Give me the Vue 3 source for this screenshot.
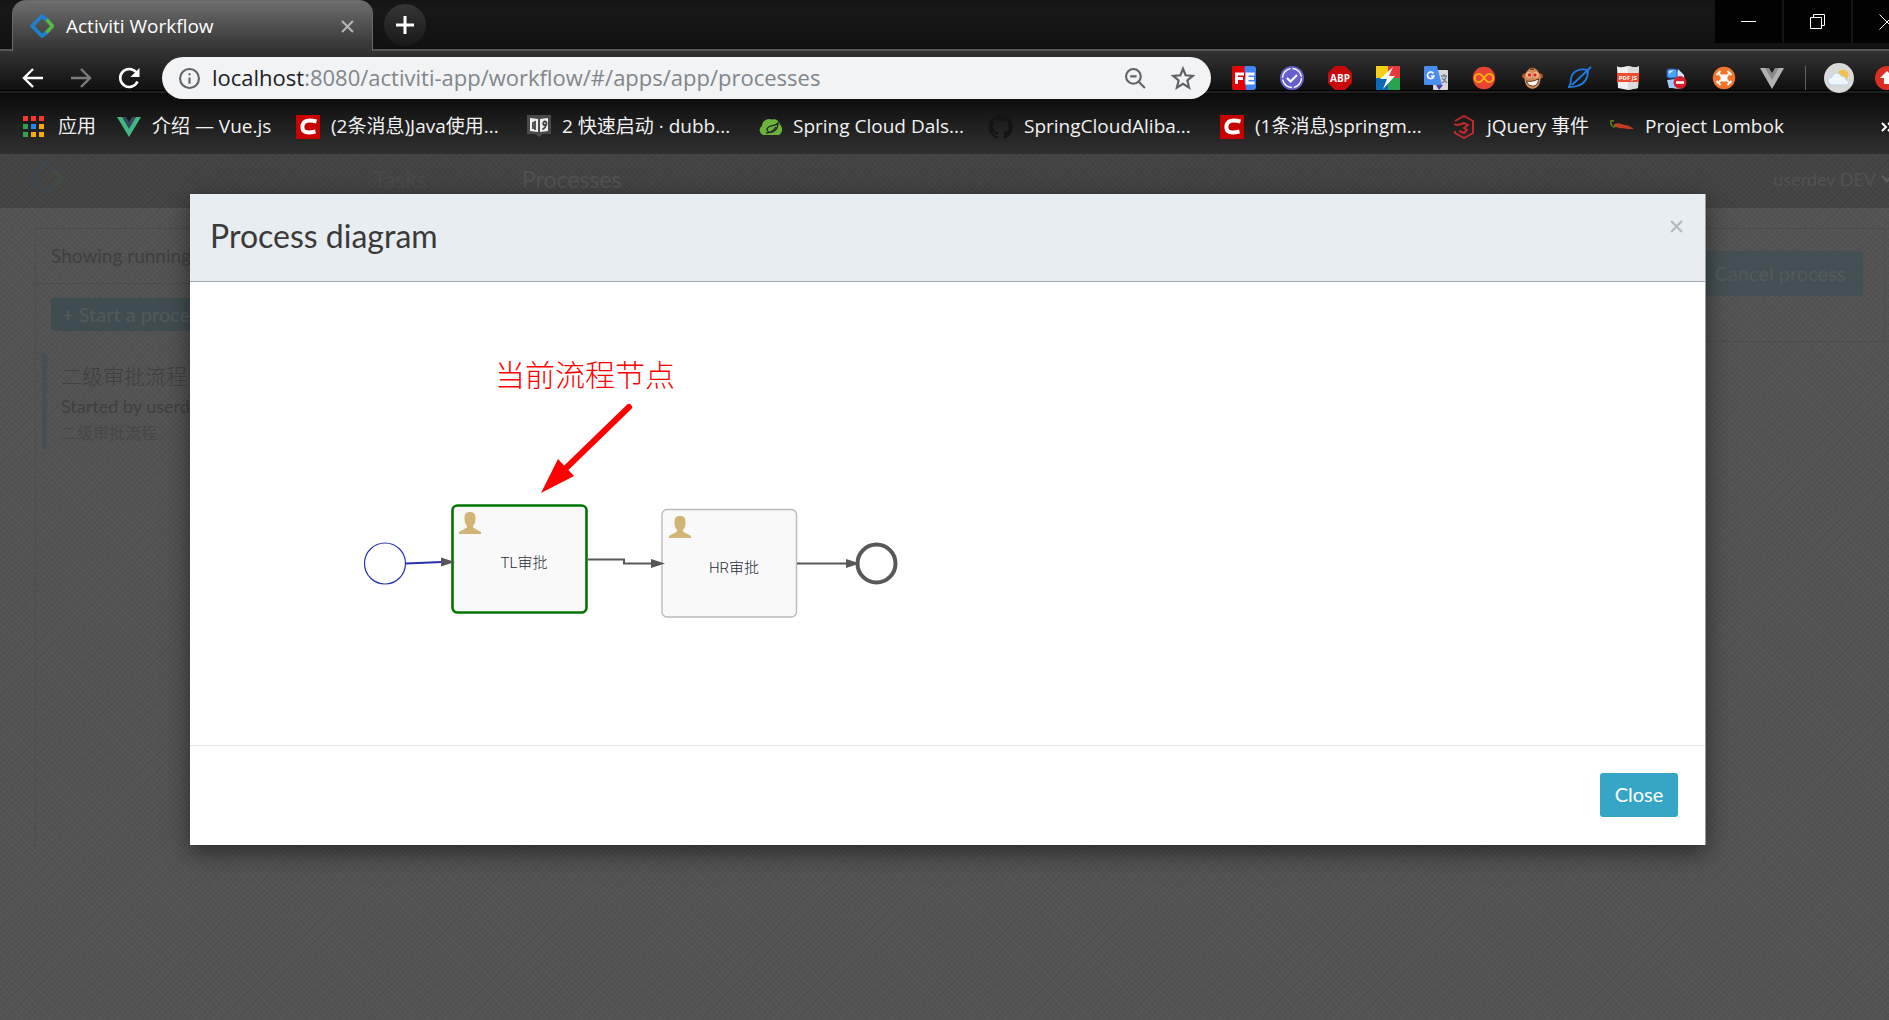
<script setup>
const bookmarks = [
  { icon: 'apps', label: '应用', width: 94 },
  { icon: 'vue', label: '介绍 — Vue.js', width: 179 },
  { icon: 'csdn', label: '(2条消息)Java使用...', width: 231 },
  { icon: 'dubbo', label: '2 快速启动 · dubb...', width: 231 },
  { icon: 'spring', label: 'Spring Cloud Dals...', width: 231 },
  { icon: 'github', label: 'SpringCloudAliba...', width: 231 },
  { icon: 'csdn', label: '(1条消息)springm...', width: 232 },
  { icon: 'jquery', label: 'jQuery 事件', width: 158 },
  { icon: 'lombok', label: 'Project Lombok', width: 180 },
]
const appColors = ['#f33a2f', '#f33a2f', '#f33a2f', '#2fa14f', '#2387f5', '#fba905', '#2fa14f', '#fba905', '#fba905']
const extensions = ['fe', 'check', 'abp', 'bolt', 'translate', 'infinity', 'monkey', 'feather', 'pdf', 'blocker', 'drone', 'vuegrey']
</script>

<template>
  <div class="window">
    <header class="browser">
      <div class="tabstrip">
        <div class="tab">
          <svg class="tab-logo" viewBox="0 0 24 24" aria-hidden="true">
            <path d="M17 6 12 2 2 12l10 10 5-4" fill="none" stroke="#1c82cf" stroke-width="3.6" stroke-linejoin="round" />
            <path d="m16.500 5.500 6 6.500-6 6.500" fill="none" stroke="#55b948" stroke-width="3.6" />
          </svg>
          <span class="tab-title">Activiti Workflow</span>
          <button class="tab-close" aria-label="Close tab">
            <svg viewBox="0 0 12 12"><path d="m1 1 10 10M11 1 1 11" stroke="#b4b4b4" stroke-width="2" /></svg>
          </button>
        </div>
        <button class="new-tab" aria-label="New tab">
          <svg viewBox="0 0 18 18"><path d="M9 0v18M0 9h18" stroke="#fff" stroke-width="3" /></svg>
        </button>
        <div class="win-buttons">
          <button aria-label="Minimize"><svg viewBox="0 0 16 16"><path d="M0 7.500h15" stroke="#fff" /></svg></button>
          <button aria-label="Restore"><svg viewBox="0 0 16 16"><path d="M.5 3.500h11v11H.5zM3.500 3V.5h11v11H12" fill="none" stroke="#fff" /></svg></button>
          <button aria-label="Close window"><svg viewBox="0 0 16 16"><path d="m.5.5 15 15m0-15-15 15" stroke="#fff" /></svg></button>
        </div>
      </div>

      <div class="bars">
        <div class="toolbar">
          <nav class="nav">
            <button aria-label="Back"><svg viewBox="0 0 24 24"><path d="M22 12H3m9-9-9 9 9 9" fill="none" stroke="#fff" stroke-width="2.400" /></svg></button>
            <button aria-label="Forward"><svg viewBox="0 0 24 24"><path d="M2 12h19m-9-9 9 9-9 9" fill="none" stroke="#7c7c7c" stroke-width="2.400" /></svg></button>
            <button aria-label="Reload"><svg viewBox="0 0 24 24"><path d="M20.500 15.500A9 9 0 1 1 19 6" fill="none" stroke="#fff" stroke-width="2.600" /><path d="M22.500 2v9h-9z" fill="#fff" /></svg></button>
          </nav>
          <div class="address">
            <svg class="addr-icon" viewBox="0 0 20 20" aria-hidden="true">
              <circle cx="10" cy="10" r="9" fill="none" stroke="#5f6368" stroke-width="2" />
              <path d="M10 9v6M10 5v2" stroke="#5f6368" stroke-width="2" />
            </svg>
            <a class="url" href="#/apps/app/processes"><b>localhost</b>:8080/activiti-app/workflow/#/apps/app/processes</a>
            <svg class="addr-icon" viewBox="0 0 20 20" aria-hidden="true">
              <circle cx="8" cy="8" r="7" fill="none" stroke="#5f6368" stroke-width="2" />
              <path d="M5 8h6M13 13l6 6" stroke="#5f6368" stroke-width="2" />
            </svg>
            <svg class="addr-star" viewBox="0 0 22 22" aria-hidden="true">
              <path d="m11 2.500 2.400 6 6.600.5-5 4.300 1.600 6.500-5.600-3.500-5.600 3.500L7 13.300 2 9l6.600-.5z" fill="none" stroke="#5f6368" stroke-width="2" />
            </svg>
          </div>
          <div class="extensions">
            <svg v-for="e in extensions" :key="e" viewBox="0 0 24 24" aria-hidden="true">
              <template v-if="e === 'fe'">
                <rect width="24" height="24" rx="3" fill="#4285f4" /><path d="M3 0h10c-2 5 2 8 0 12s1 7 1 12H3a3 3 0 0 1-3-3V3a3 3 0 0 1 3-3z" fill="#e60000" />
                <path d="M4.500 18V8H12M4.500 12.500H11M22.500 8H15v9h7.500M15 12.500h7" fill="none" stroke="#fff" stroke-width="3" />
              </template>
              <template v-else-if="e === 'check'">
                <circle cx="12" cy="12" r="12" fill="#6660cf" /><circle cx="12" cy="12" r="9.500" fill="none" stroke="#fff" stroke-width="1.400" stroke-dasharray="13 2" /><path d="m7 12 3.500 3.500L17 9" fill="none" stroke="#fff" stroke-width="2.200" />
              </template>
              <template v-else-if="e === 'abp'">
                <path d="M7 0h10l7 7v10l-7 7H7l-7-7V7z" fill="#c90a0a" /><text x="12" y="16" text-anchor="middle" class="abp">ABP</text>
              </template>
              <template v-else-if="e === 'bolt'">
                <rect width="12" height="12" fill="#f5d017" /><rect x="12" width="12" height="12" fill="#e5393a" /><rect y="12" width="12" height="12" fill="#0d6ab5" /><rect x="12" y="12" width="12" height="12" fill="#28a352" /><path d="M17 1 4 13h7L7 23l12-13h-6z" fill="#fff" />
              </template>
              <template v-else-if="e === 'translate'">
                <rect x="9" y="4" width="15" height="20" rx="1" fill="#d8d8d8" /><path d="M12 19h7l-4 5z" fill="#4a3fa8" /><path d="M1 0h12l5 19H1a1 1 0 0 1-1-1V1a1 1 0 0 1 1-1z" fill="#4a8df0" />
                <path d="M9.500 7.500A3.300 3.300 0 1 0 10 10H7" fill="none" stroke="#fff" stroke-width="1.600" /><path d="M17 10h6m-3-2v2m2 1c-1 3-2 5-4 6m0-5 5 5" fill="none" stroke="#71808f" stroke-width="1.300" />
              </template>
              <template v-else-if="e === 'infinity'">
                <circle cx="12" cy="12" r="11.200" fill="#ea4335" /><path d="M12 12c-3-4-4-4.200-5-4.200a4.200 4.200 0 0 0 0 8.400c1 0 2-.2 5-4.200s4-4.200 5-4.200a4.200 4.200 0 0 1 0 8.400c-1 0-2-.2-5-4.200z" fill="none" stroke="#fbbc05" stroke-width="1.700" />
              </template>
              <template v-else-if="e === 'monkey'">
                <circle cx="4.500" cy="10" r="2.500" fill="#a65a2c" /><circle cx="20.500" cy="10" r="2.500" fill="#a65a2c" /><path d="M8 4c3-3 6-3 9 0 4 4 4 8 3 12-2 9-13 9-15 0-1-4-1-8 3-12z" fill="#d08a58" /><path d="m10 4 1-3 1 2 2-2v3" fill="#8a4520" /><ellipse cx="9" cy="9" rx="3" ry="3" fill="#f0b890" /><ellipse cx="15.500" cy="9" rx="3" ry="3" fill="#f0b890" /><circle cx="9.500" cy="9" r="1.700" fill="#d22" /><circle cx="15" cy="9" r="1.700" fill="#d22" /><path d="M6.500 15c4 1 8 0 12-2 0 9-10 9-12 2z" fill="#fff" stroke="#5b3018" stroke-width="1" />
              </template>
              <template v-else-if="e === 'feather'">
                <path d="M1 21c2 0 5 0 8-1 8-2 11-8 11-16C12 2 4 5 3 13c0 3 0 5-2 8zm3-2L23 1" fill="none" stroke="#1f7de8" stroke-width="1.800" />
              </template>
              <template v-else-if="e === 'pdf'">
                <path d="M1 0c4 3 8 0 11 0s7 3 11 0l-1 22-10 2-10-2z" fill="#efefef" /><path d="M12 0c3 0 7 3 11 0l-1 22-10 2z" fill="#dcdcdc" /><rect x="1" y="7" width="22" height="9" fill="#ef4b2c" /><text x="12" y="14" text-anchor="middle" class="pdf">PDF JS</text>
              </template>
              <template v-else-if="e === 'blocker'">
                <path d="m14 3 6 6 1 9-6 5-7-1z" fill="#d4e7fb" /><rect x="3" y="3" width="10" height="9" rx="2" fill="#4aa3f3" stroke="#2452b5" /><path d="m5 5 5-1-5 4z" fill="#e2f4ff" /><path d="m3 14 8-1v9H5z" fill="#9ccafa" /><circle cx="16" cy="16.500" r="6.500" fill="#d81e2b" /><path d="M12 16.500h8" stroke="#fff" stroke-width="2.600" />
              </template>
              <template v-else-if="e === 'drone'">
                <circle cx="12" cy="12" r="11.200" fill="#f4752a" /><path d="m7 8 10 8M17 8 7 16" stroke="#fff" stroke-width="1.800" /><rect x="8.500" y="8.500" width="7" height="7" rx="2" fill="#fff" /><path d="m4.500 9 4-4M15.500 5l4 4M4.500 15l4 4m7 0 4-4" stroke="#fff" stroke-width="2" />
              </template>
              <template v-else>
                <path d="M0 2h24L12 23z" fill="#b2b2b2" /><path d="M5 2h14l-7 12z" fill="#8b8b8b" /><path d="M9 2h6l-3 5z" fill="#1b1b1b" />
              </template>
            </svg>
          </div>
          <span class="divider"></span>
          <svg class="avatar" viewBox="0 0 30 30" aria-hidden="true">
            <circle cx="15" cy="15" r="15" fill="#d9d9d9" /><circle cx="19" cy="12" r="5.500" fill="#f3c14b" /><path d="M8 22a4 4 0 0 1 0-8c1-5 8-5 9-1 3 0 5 2 5 4 4 1 3 5 0 5z" fill="#eef5fc" stroke="#bcd3ea" />
          </svg>
          <svg class="update" viewBox="0 0 24 24" aria-hidden="true">
            <circle cx="12" cy="12" r="12" fill="#d93025" /><path d="m12 5 7 7h-4v6H9v-6H5z" fill="#fff" />
          </svg>
        </div>

        <nav class="bookmarks">
          <a v-for="b in bookmarks" :key="b.label" href="#" class="bookmark" :style="{ width: b.width + 'px' }">
            <svg viewBox="0 0 24 24" aria-hidden="true">
              <template v-if="b.icon === 'apps'">
                <rect v-for="(c, i) in appColors" :key="i" :x="(i % 3) * 8" :y="1 + Math.floor(i / 3) * 8" width="5" height="5" :fill="c" />
              </template>
              <template v-else-if="b.icon === 'vue'">
                <path d="M0 2h24L12 22z" fill="#41b883" /><path d="M5 2h14l-7 12z" fill="#35495e" /><path d="M9 2h6l-3 5z" fill="#181818" />
              </template>
              <template v-else-if="b.icon === 'csdn'">
                <rect width="24" height="24" fill="#c90000" /><path d="M20.500 6.500c-8-2-13-1-14 4-1 7 4 8 13 6" fill="none" stroke="#fff" stroke-width="4" />
              </template>
              <template v-else-if="b.icon === 'dubbo'">
                <path d="M0 0h24v19h-8l-4 3-4-3H0z" fill="#4a4a4a" /><path d="m3 3 8 1v13l-8-1zM21 3l-8 1v13l8-1z" fill="#efefef" /><path d="M6 14V8l2-1v8M18.500 9.500c-3 2-3-3-.5-3s2 5-2.500 8" fill="none" stroke="#444" stroke-width="1.800" />
              </template>
              <template v-else-if="b.icon === 'spring'">
                <path d="M5 20a5 5 0 0 1-1-9C4 6 9 2.500 14 4.500c4-1 7 1 8 5 3 3 3 8-1 10.500z" fill="#6cb33e" /><path d="M20 8c-3 4-9 1-11 6 0 6 11 4 11-6zM8 18c5 0 8-3 10-6" fill="none" stroke="#242424" stroke-width="1.300" />
              </template>
              <template v-else-if="b.icon === 'github'">
                <path d="M12 0a12 12 0 0 0-4 23.400c.6.1.8-.3.8-.6v-2c-3.400.7-4-1.600-4-1.600-.6-1.400-1.400-1.800-1.400-1.800-1-.8.1-.8.1-.8 1.200.1 1.900 1.300 1.900 1.300 1 1.800 2.800 1.300 3.500 1 .1-.8.400-1.300.8-1.600-2.700-.3-5.500-1.300-5.500-6 0-1.300.5-2.400 1.200-3.200-.1-.3-.5-1.500.1-3.200 0 0 1-.3 3.300 1.200a12 12 0 0 1 6 0C17.300 4.600 18.300 5 18.300 5c.7 1.600.2 2.800.1 3.100.8.9 1.200 2 1.200 3.300 0 4.600-2.800 5.600-5.500 5.900.5.400.9 1.100.9 2.200v3.300c0 .3.200.7.8.6A12 12 0 0 0 12 0z" fill="#141414" />
              </template>
              <template v-else-if="b.icon === 'jquery'">
                <path d="m3 6 9-5 9 5v12l-9 5-9-5v-2" fill="none" stroke="#c1292e" stroke-width="2" /><path d="M2 9c3 2 6 1 10-1l4 2-4 3 3 2-3 3-5-2" fill="none" stroke="#c1292e" stroke-width="2" />
              </template>
              <template v-else>
                <path d="M4 9c4-2 8 0 11 1 3 0 6 2 9 4-6 0-15 0-20-3z" fill="#c73a22" /><path d="M6 10c-1 3-4 2-5-1s0-4 3-3" fill="none" stroke="#5d7a22" stroke-width="1.800" />
              </template>
            </svg>
            <span>{{ b.label }}</span>
          </a>
          <button class="more" aria-label="More bookmarks">
            <svg viewBox="0 0 12 10"><path d="m1 1 4 4-4 4M7 1l4 4-4 4" fill="none" stroke="#fff" stroke-width="2" /></svg>
          </button>
        </nav>
      </div>
    </header>

    <main class="page">
      <div class="app-header">
        <svg class="app-logo" viewBox="0 0 36 36" aria-hidden="true">
          <path d="m25 9-8-7L2 17l15 15 8-6" fill="none" stroke="#3f464d" stroke-width="4" /><path d="m26 9 8 8-8 9" fill="none" stroke="#424a42" stroke-width="4" />
        </svg>
        <a class="app-link" href="#/tasks">Tasks</a>
        <a class="app-link active" href="#/processes">Processes</a>
        <span class="user">userdev DEV
          <svg viewBox="0 0 12 8" aria-hidden="true"><path d="m1 1 5 5 5-5" fill="none" stroke="#5a5a5a" stroke-width="3" /></svg>
        </span>
      </div>
      <div class="content">
        <section class="list">
          <p class="showing">Showing running</p>
          <button class="start">+ Start a process</button>
          <article class="item">
            <h3>二级审批流程</h3>
            <p class="by">Started by userdev</p>
            <p class="name">二级审批流程</p>
          </article>
        </section>
        <section class="detail">
          <button class="cancel">Cancel process</button>
        </section>
      </div>

      <div class="overlay">
        <section class="modal" role="dialog" aria-labelledby="modal-title">
          <div class="modal-header">
            <h2 id="modal-title">Process diagram</h2>
            <button class="dismiss" aria-label="Dismiss">
              <svg viewBox="0 0 12 12"><path d="m1 1 10 10M11 1 1 11" stroke="#b4b8bb" stroke-width="2" /></svg>
            </button>
          </div>
          <div class="modal-body">
            <svg class="diagram" width="900" height="463" viewBox="0 0 900 463">
              <defs>
                <path id="person" d="M11 0c4 0 5.500 2 5.500 6 0 3-.5 6-2.500 8v1.500l8 4.500v2H0v-2l8-4.500V14C6 12 5.500 9 5.500 6c0-4 1.500-6 5.500-6z" fill="#d1b575" />
                <path id="head" d="M0-4.500 14 0 0 4.500z" fill="#585858" />
              </defs>
              <circle cx="195" cy="281.500" r="20.500" fill="#fff" stroke="#2632aa" stroke-width="1.200" />
              <rect x="262.500" y="223.500" width="134" height="107" rx="5" fill="#f9f9f9" stroke="#017501" stroke-width="2.600" />
              <rect x="472" y="227.500" width="134.500" height="107.500" rx="5" fill="#f9f9f9" stroke="#bbb" stroke-width="1.400" />
              <circle cx="686.500" cy="281.500" r="19" fill="#fff" stroke="#585858" stroke-width="4" />
              <path d="M216 281.500 252 280" stroke="#2632aa" stroke-width="2" />
              <path d="M398 277.500h36v4h28M607 281.500h50" fill="none" stroke="#585858" stroke-width="2" />
              <use href="#head" x="251" y="280" />
              <use href="#head" x="461" y="281.500" />
              <use href="#head" x="656" y="281.500" />
              <use href="#person" x="269" y="230" />
              <use href="#person" x="479" y="234" />
              <text x="334" y="286" text-anchor="middle" class="task">TL审批</text>
              <text x="544" y="291" text-anchor="middle" class="task">HR审批</text>
              <text x="305" y="104" class="note">当前流程节点</text>
              <path d="m439 125-66 64" stroke="red" stroke-width="6" stroke-linecap="round" />
              <path d="m351 211 17-34 16 17z" fill="red" />
            </svg>
          </div>
          <div class="modal-footer">
            <button class="close">Close</button>
          </div>
        </section>
      </div>
    </main>
  </div>
</template>

<style>
body { margin: 0; background: #525252; overflow: hidden; }
</style>

<style scoped>
* { box-sizing: border-box; }
button { border: 0; padding: 0; background: none; font: inherit; color: inherit; display: flex; align-items: center; justify-content: center; }
a { text-decoration: none; color: inherit; }
h2, h3, p { margin: 0; font-weight: 400; }
svg { display: block; flex: none; }
.window { min-height: 100vh; display: flex; flex-direction: column; overflow: hidden; }
.browser { font-family: "Open Sans", "Noto Sans CJK SC", sans-serif; color: #f2f2f2; font-size: 19px; background: #141414; }

.tabstrip { display: flex; height: 51px; background: linear-gradient(#141414, #181818 20%, #111); border-bottom: 2px solid #555; }
.tab { display: flex; align-items: center; width: 361px; height: 51px; margin-left: 12px; padding: 0 18px 0 17px; border: 1px solid #686868; border-bottom: 0; border-radius: 14px 14px 0 0; background: linear-gradient(#6e6e6e, #3a3a3a 85%, #333); }
.tab-logo { width: 24px; height: 24px; }
.tab-title { flex: 1; margin-left: 12px; color: #fff; }
.tab-close svg { width: 13px; height: 13px; }
.new-tab { width: 42px; height: 42px; margin: 4px 0 0 11px; border-radius: 50%; background: linear-gradient(#353535, #191919); }
.new-tab svg { width: 18px; height: 18px; }
.win-buttons { display: flex; gap: 2px; margin-left: auto; margin-right: -31px; background: #141414; height: 43px; }
.win-buttons button { width: 67px; height: 43px; background: #020202; }
.win-buttons svg { width: 16px; height: 16px; }

.bars { background: linear-gradient(#333 0, #101010 39px, #000 39px, #000 40px, #1f1f1f 40px, #1f1f1f 42px, #0a0a0a 42px, #1c1c1c 70px, #303030 103px); }
.toolbar { display: flex; align-items: center; height: 54px; padding-left: 21px; margin-right: -10px; }
.nav { display: flex; gap: 24px; }
.nav svg { width: 24px; height: 24px; }
.address { flex: 1; min-width: 0; display: flex; align-items: center; height: 42px; margin: 0 21px; padding: 0 16px; border-radius: 21px; background: #f1f3f4; color: #80868b; }
.addr-icon { width: 21px; height: 21px; margin-left: 1px; }
.addr-star { width: 24px; height: 24px; margin-left: 25px; }
.url { flex: 1; margin-left: 12px; font-size: 22px; line-height: 30px; padding-bottom: 2px; white-space: nowrap; overflow: hidden; }
.url b { font-weight: 400; color: #202124; }
.extensions { display: flex; gap: 24px; }
.extensions svg { width: 24px; height: 24px; }
.abp { font: bold 10px "Open Sans", sans-serif; fill: #fff; }
.pdf { font: bold 6px "Open Sans", sans-serif; fill: #fff; }
.divider { width: 1px; height: 24px; margin: 0 18px 0 21px; background: #606060; }
.avatar { width: 30px; height: 30px; }
.update { width: 24px; height: 24px; margin-left: 21px; }
.bookmarks { display: flex; align-items: center; height: 49px; padding: 0 0 6px 23px; }
.bookmark { display: flex; align-items: center; gap: 11px; flex: none; white-space: nowrap; }
.bookmark svg { width: 24px; height: 24px; }
.bookmark span { line-height: 24px; padding-bottom: 2px; }
.more { margin-left: auto; margin-right: -4px; }
.more svg { width: 12px; height: 10px; }

.page { position: relative; flex: 1; min-height: 866px; font-family: Lato, "Noto Sans CJK SC", sans-serif; font-size: 18px; color: #404040; background: repeating-linear-gradient(45deg, rgba(255, 255, 255, .025) 0 1px, transparent 1px 4px), repeating-linear-gradient(-45deg, rgba(0, 0, 0, .05) 0 1px, transparent 1px 4px), #535353; }
.app-header { display: flex; align-items: center; height: 54px; padding: 0 0 4px 28px; background: rgba(0, 0, 0, .18); }
.app-logo { width: 36px; height: 36px; }
.app-link { font-size: 23px; color: #4a4a4a; margin-left: 95px; }
.app-link.active { color: #525252; }
.app-logo + .app-link { margin-left: 309px; }
.user { display: flex; align-items: center; gap: 5px; margin-left: auto; margin-right: -4px; color: #525252; white-space: nowrap; }
.user svg { width: 12px; height: 8px; }
.content { display: flex; gap: 24px; padding: 20px 4px 0 35px; }
.list { width: 480px; border: 1px solid #4c4c4c; border-bottom: 0; padding-bottom: 400px; font-weight: 300; }
.showing { height: 55px; padding-left: 15px; line-height: 53px; font-size: 19px; border-bottom: 1px solid #4c4c4c; }
.start { justify-content: flex-start; height: 33px; width: 200px; margin: 14px 0 0 15px; padding: 0 0 2px 11px; border-radius: 3px; background: #404d50; color: #535a5b; font-size: 20px; font-weight: 400; }
.item { height: 95px; margin: 23px 0 0 6px; padding: 7px 0 0 14px; border-left: 5px solid #435154; }
.item h3 { font-size: 21px; line-height: 30px; font-weight: 300; }
.by { line-height: 30px; }
.name { font-size: 16px; line-height: 24px; color: #484848; }
.detail { flex: 1; height: 114px; padding: 22px 21px 0 0; border: 1px solid #4c4c4c; border-left: 0; }
.cancel { height: 45px; width: 166px; margin-left: auto; padding-bottom: 2px; border-radius: 3px; background: #445053; color: #535a5b; font-size: 20px; }

.overlay { position: absolute; inset: 0; padding: 40px 183px 0 190px; }
.modal { background: #fff; box-shadow: 0 7px 22px rgba(0, 0, 0, .5); border-right: 1px solid #999; }
.modal-header { display: flex; align-items: center; justify-content: space-between; height: 88px; padding: 0 22px 2px 20px; background: #e8edf1; border-bottom: 1px solid #a0a6b4; color: #3a3a3a; }
.modal-header h2 { font-size: 32px; line-height: 40px; padding-bottom: 2px; }
.dismiss { margin-bottom: 20px; }
.dismiss svg { width: 13px; height: 13px; }
.modal-body { height: 463px; overflow: hidden; }
.task { font-family: Roboto, "Noto Sans CJK SC", sans-serif; font-size: 15px; font-weight: 300; fill: #262c36; }
.note { font-family: "Noto Sans CJK SC", sans-serif; font-size: 30px; font-weight: 300; fill: red; }
.modal-footer { display: flex; justify-content: flex-end; padding: 27px 27px 28px; border-top: 1px solid #e2e2e2; }
.close { width: 78px; height: 44px; padding-bottom: 2px; border-radius: 3px; background: #37a6c6; color: #fff; font-size: 20px; }
</style>
